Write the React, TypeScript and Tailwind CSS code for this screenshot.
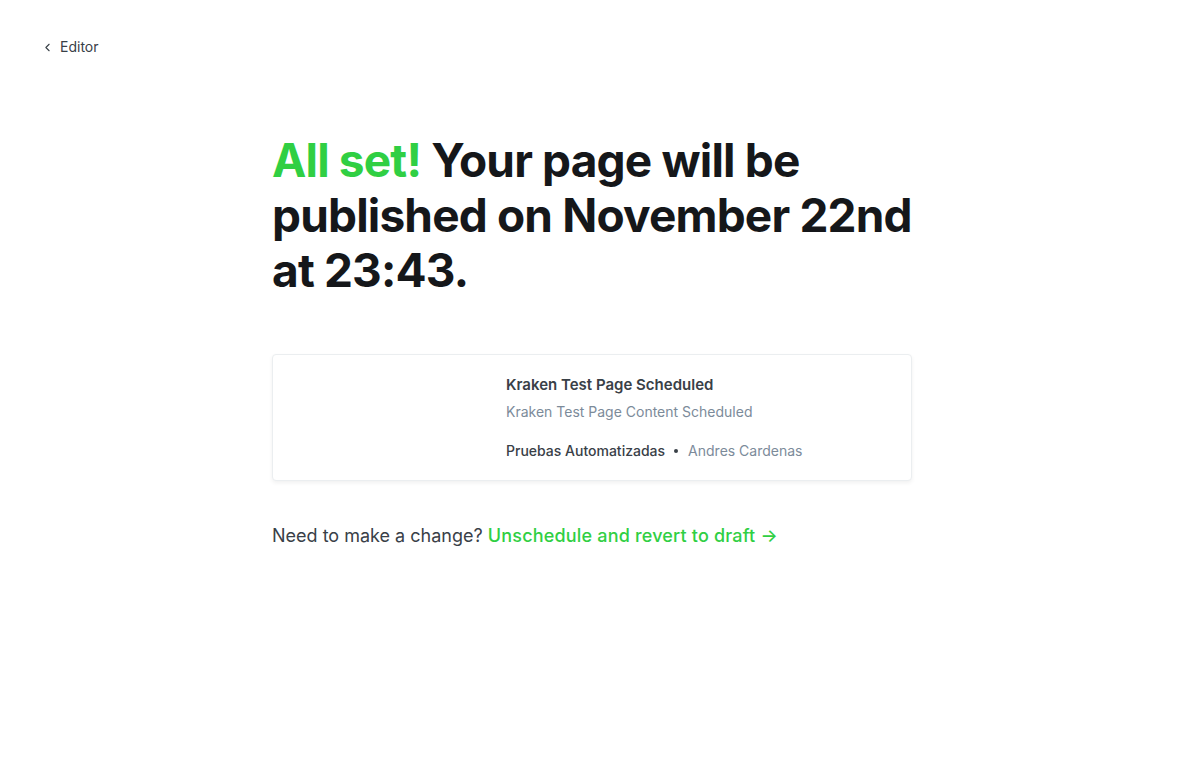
import React from 'react';
import { ChevronLeft } from 'lucide-react';

export default function App() {
    return (
        <div className="min-h-screen w-full bg-white text-[#15171a]" style={{ fontFamily: 'Inter, "Noto Sans", sans-serif' }}>
            <div className="px-[41px] pt-[37px]">
                <button className="flex items-center gap-[6px] text-[14px] leading-[20px] text-[#394047]">
                    <ChevronLeft className="w-[13px] h-[13px]" strokeWidth={2} />
                    Editor
                </button>
            </div>

            <div className="mx-auto w-[640px] pt-[76px]">
                <h1 className="w-[660px] text-[46px] leading-[55px] font-bold tracking-[-0.018em] text-[#15171a]">
                    <span className="text-[#30cf43]">All set!</span> Your page will be published on November 22nd at 23:43.
                </h1>

                <div className="mt-[56px] flex h-[127px] rounded-[4px] border border-[#ebeef0] bg-white shadow-[0_2px_4px_rgba(0,0,0,0.06)]">
                    <div className="w-[233px] shrink-0" />
                    <div className="flex flex-col pt-[20px]">
                        <div className="text-[15px] leading-[20px] font-semibold text-[#394047]">Kraken Test Page Scheduled</div>
                        <div className="mt-[7px] text-[14px] leading-[20px] text-[#7c8b9a]">Kraken Test Page Content Scheduled</div>
                        <div className="mt-[19px] flex items-center text-[14px] leading-[20px]">
                            <span className="font-medium text-[#394047]">Pruebas Automatizadas</span>
                            <span className="ml-[9px] mr-[10px] h-[4px] w-[4px] rounded-full bg-[#394047]" />
                            <span className="text-[#7c8b9a]">Andres Cardenas</span>
                        </div>
                    </div>
                </div>

                <p className="mt-[42px] text-[18px] leading-[26px] text-[#394047]">
                    Need to make a change?{' '}
                    <a className="font-medium tracking-[0.01em] text-[#30cf43] cursor-pointer">Unschedule and revert to draft →</a>
                </p>
            </div>
        </div>
    );
}
